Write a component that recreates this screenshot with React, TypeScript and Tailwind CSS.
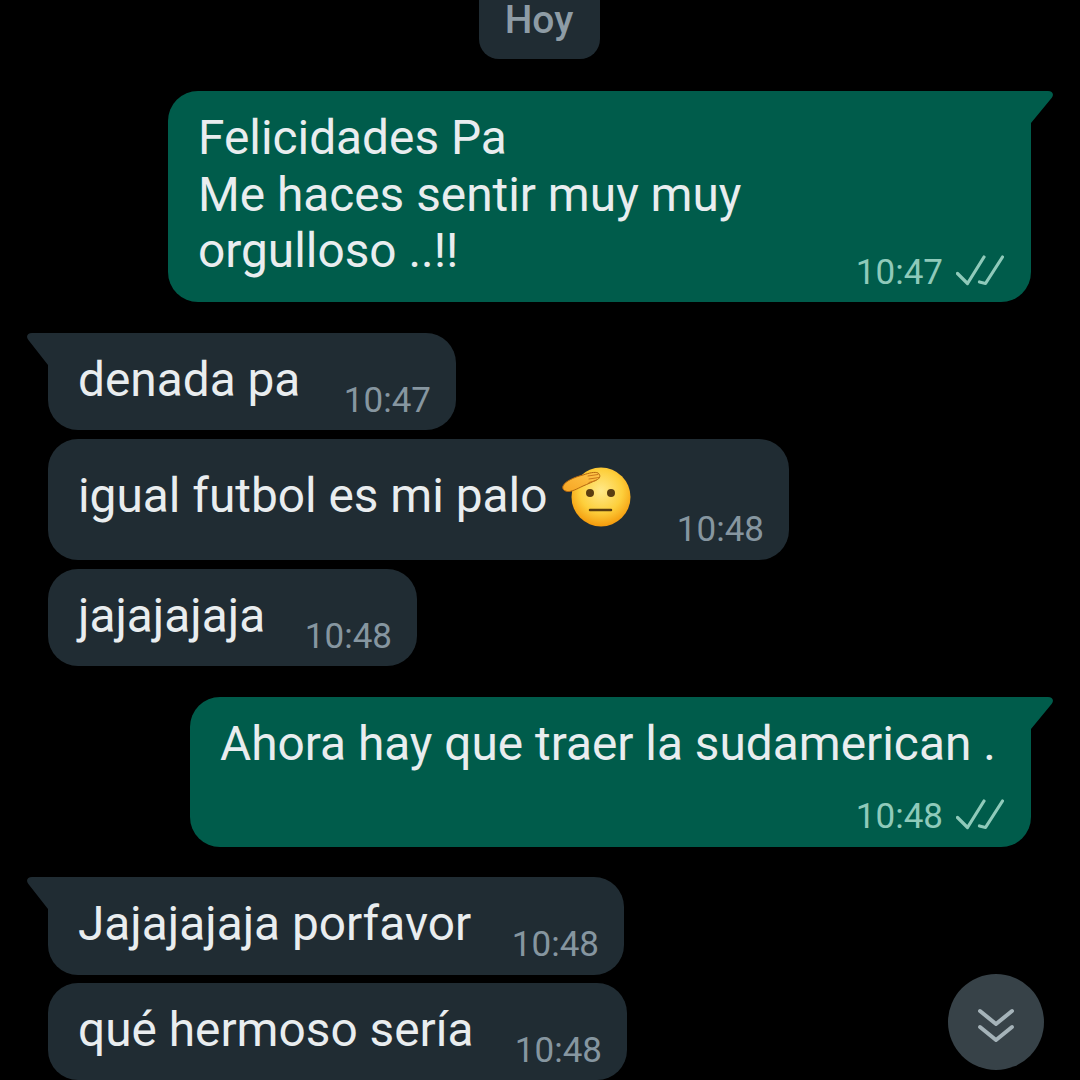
const TIME_IN = "text-[35px] leading-[40px] text-[#8696a0]";
const TIME_OUT = "text-[35px] leading-[40px] text-[#8fcaba]";

function TailRight() {
  return (
    <svg className="absolute top-0 left-full" width="23" height="32" viewBox="0 0 23 32">
      <path d="M0 0H17C21.5 0 23.5 3.5 20.6 7L0 32Z" fill="#005c4b" />
    </svg>
  );
}

function TailLeft() {
  return (
    <svg className="absolute top-0 right-full" width="21" height="32" viewBox="0 0 21 32">
      <path d="M21 0H5C0.5 0 -1.5 3.5 1.4 7L21 32Z" fill="#202c33" />
    </svg>
  );
}

function Checks() {
  return (
    <svg width="48" height="34" viewBox="0 0 48 34" fill="none" stroke="#8fcaba" strokeWidth="3.2" strokeLinecap="round" strokeLinejoin="round" className="-mt-[7px]">
      <path d="M1.5 20.5L11.5 30.5L28 4" />
      <path d="M23.5 29L29.5 30.5L46.5 4" />
    </svg>
  );
}

function Salute() {
  return (
    <svg width="70" height="64" viewBox="0 0 70 64" className="shrink-0 ml-[15px] -mt-[3px]">
      <defs>
        <radialGradient id="face" cx="50%" cy="40%" r="60%">
          <stop offset="0%" stopColor="#ffe98a" />
          <stop offset="60%" stopColor="#fdcf3c" />
          <stop offset="100%" stopColor="#f49a0c" />
        </radialGradient>
        <linearGradient id="hand" x1="0" y1="1" x2="1" y2="0">
          <stop offset="0%" stopColor="#f6a523" />
          <stop offset="100%" stopColor="#ffc64a" />
        </linearGradient>
      </defs>
      <circle cx="39" cy="32" r="29.5" fill="url(#face)" />
      <path d="M1 21C3 16 13 12 21 10C27 8 33 6.5 36 8C38.5 9.5 38.5 13 35.5 14.5C30 17 26 19 21 21C15 24 9 27 5.5 26.5C2 26 0 24 1 21Z" fill="url(#hand)" stroke="#b3660f" strokeWidth="1" />
      <path d="M26 11L36 9.5M27 14L37 12.5M27 17.5L34 15.5" stroke="#c9781a" strokeWidth="1" fill="none" strokeLinecap="round" />
      <circle cx="28" cy="28" r="4" fill="#5a3d10" />
      <circle cx="49" cy="28" r="4" fill="#5a3d10" />
      <path d="M28 45H49" stroke="#5a3d10" strokeWidth="2.5" strokeLinecap="round" />
    </svg>
  );
}

function Incoming({ width, time, children, tail, className }: { width: string; time: string; children: React.ReactNode; tail?: boolean; className: string }) {
  return (
    <div className={`relative ml-[48px] flex justify-between pl-[30px] pr-[25px] bg-[#202c33] rounded-[30px] ${tail ? "rounded-tl-none" : ""} ${width} ${className}`}>
      {tail && <TailLeft />}
      <div className="flex items-start self-start">{children}</div>
      <span className={`self-end ${TIME_IN}`}>{time}</span>
    </div>
  );
}

export default function App() {
  return (
    <div className="relative w-[1080px] h-[1080px] overflow-hidden bg-black flex flex-col text-[47.8px] leading-[56.5px] text-[#e9edef] font-['Roboto',sans-serif]">
      <div className="self-center mr-[2px] w-[121px] h-[59px] shrink-0 rounded-b-[20px] bg-[#202c33] flex justify-center text-[39px] leading-[40px] font-medium text-[#8e9ca5]">
        Hoy
      </div>

      <div className="relative self-end mt-[32px] mr-[49px] w-[863px] h-[211px] shrink-0 flex justify-between items-end pt-[19px] pl-[30px] pr-[27px] pb-[9px] bg-[#005c4b] rounded-[30px] rounded-tr-none">
        <TailRight />
        <div className="self-start">
          Felicidades Pa
          <br />
          Me haces sentir muy muy
          <br />
          orgulloso ..!!
        </div>
        <div className="flex items-center gap-[13px]">
          <span className={TIME_OUT}>10:47</span>
          <Checks />
        </div>
      </div>

      <Incoming tail width="w-[408px]" time="10:47" className="mt-[31px] h-[97px] shrink-0 pt-[19px] pb-[9px]">
        denada pa
      </Incoming>

      <Incoming width="w-[741px]" time="10:48" className="mt-[9px] h-[121px] shrink-0 pt-[29px] pb-[10px]">
        igual futbol es mi palo
        <Salute />
      </Incoming>

      <Incoming width="w-[369px]" time="10:48" className="mt-[9px] h-[97px] shrink-0 pt-[19px] pb-[9px]">
        jajajajaja
      </Incoming>

      <div className="relative self-end mt-[31px] mr-[49px] w-[841px] h-[150px] shrink-0 flex flex-col justify-between pt-[19px] pl-[30px] pr-[27px] pb-[10px] bg-[#005c4b] rounded-[30px] rounded-tr-none">
        <TailRight />
        <div>Ahora hay que traer la sudamerican .</div>
        <div className="self-end flex items-center gap-[13px]">
          <span className={TIME_OUT}>10:48</span>
          <Checks />
        </div>
      </div>

      <Incoming tail width="w-[576px]" time="10:48" className="mt-[30px] h-[98px] shrink-0 pt-[19px] pb-[10px]">
        Jajajajaja porfavor
      </Incoming>

      <Incoming width="w-[579px]" time="10:48" className="mt-[8px] h-[97px] shrink-0 pt-[19px] pb-[9px]">
        qué hermoso sería
      </Incoming>

      <div className="absolute left-[948px] top-[974px] w-[96px] h-[96px] rounded-full bg-[#374248] flex items-center justify-center pt-[8px]">
        <svg width="38" height="36" viewBox="0 0 38 36" fill="none" stroke="#a5b3b9" strokeWidth="4" strokeLinecap="round" strokeLinejoin="round">
          <path d="M3 3L19 16L35 3" />
          <path d="M3 19L19 32L35 19" />
        </svg>
      </div>
    </div>
  );
}
